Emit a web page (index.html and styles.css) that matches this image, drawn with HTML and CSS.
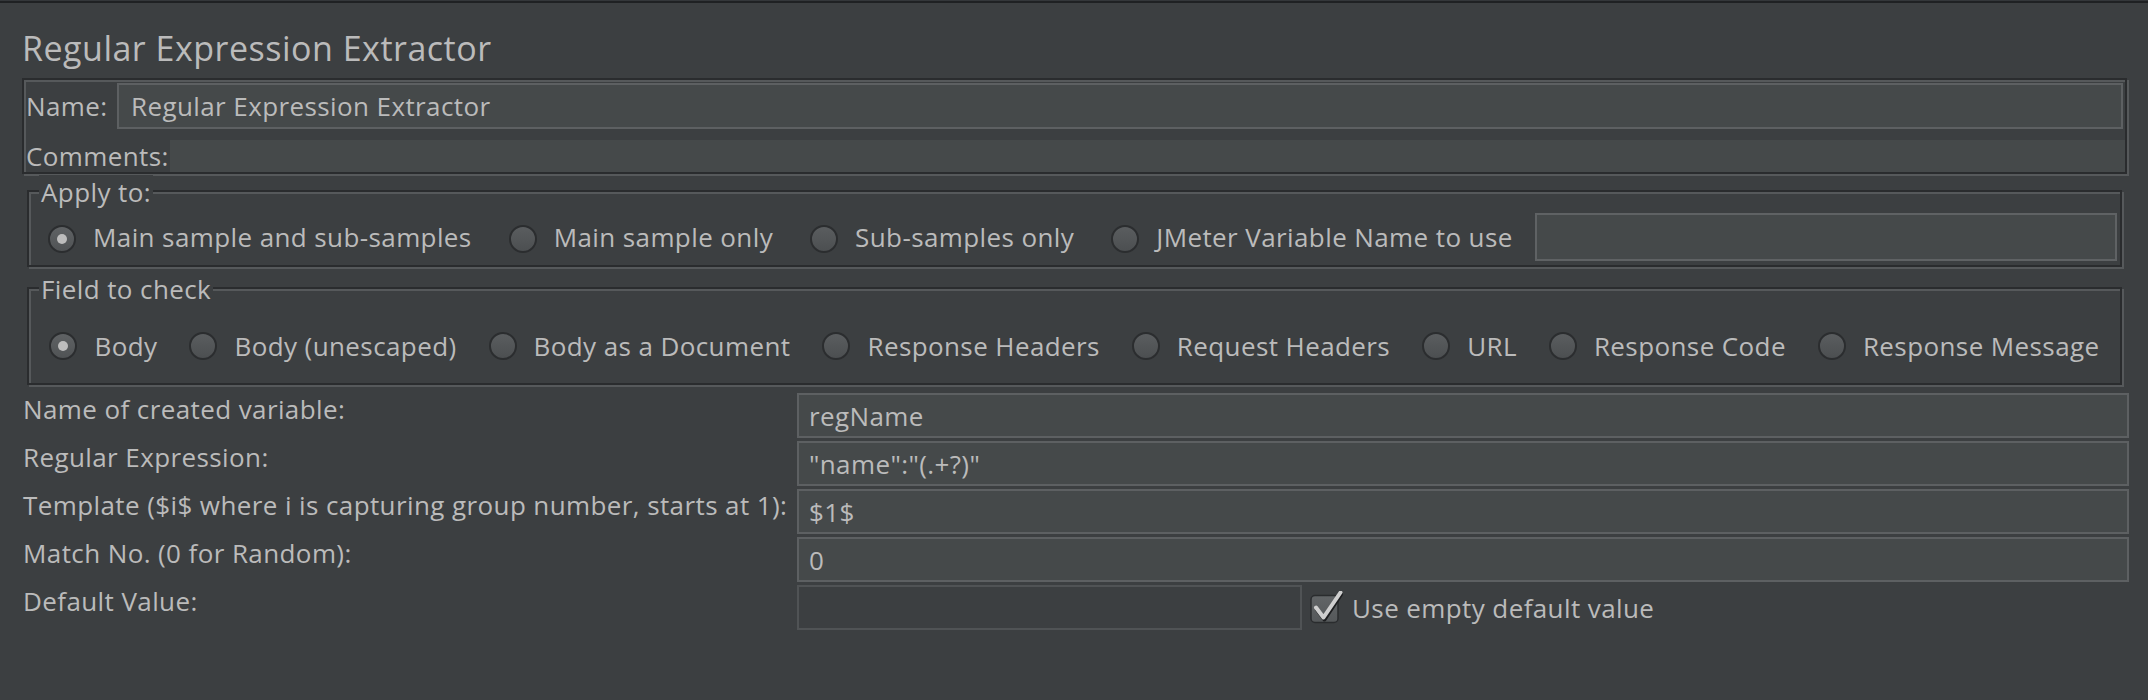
FILE: index.html
```html
<!DOCTYPE html>
<html>
<head>
<meta charset="utf-8">
<title>Regular Expression Extractor</title>
<link rel="stylesheet" href="styles.css">
</head>
<body>
<div class="topline"></div>
<div class="title">Regular Expression Extractor</div>

<div class="etched namepanel">
  <div class="name-row">
    <div class="name-label">Name:</div>
    <div class="field name-field">Regular Expression Extractor</div>
  </div>
  <div class="comments-row">
    <div class="comments-label">Comments:</div>
    <div class="comments-fill"></div>
  </div>
</div>

<div class="etched group apply">
  <span class="legend">Apply to:</span>
  <div class="opt"><span class="radio on"><span class="dot"></span></span><span>Main sample and sub-samples</span></div>
  <div class="opt"><span class="radio"></span><span>Main sample only</span></div>
  <div class="opt"><span class="radio"></span><span>Sub-samples only</span></div>
  <div class="opt last"><span class="radio"></span><span>JMeter Variable Name to use</span></div>
  <div class="field var-field"></div>
</div>

<div class="etched group check">
  <span class="legend">Field to check</span>
  <div class="opt"><span class="radio on"><span class="dot"></span></span><span>Body</span></div>
  <div class="opt"><span class="radio"></span><span>Body (unescaped)</span></div>
  <div class="opt"><span class="radio"></span><span>Body as a Document</span></div>
  <div class="opt"><span class="radio"></span><span>Response Headers</span></div>
  <div class="opt"><span class="radio"></span><span>Request Headers</span></div>
  <div class="opt"><span class="radio"></span><span>URL</span></div>
  <div class="opt"><span class="radio"></span><span>Response Code</span></div>
  <div class="opt"><span class="radio"></span><span>Response Message</span></div>
</div>

<div class="form">
  <div class="flabel">Name of created variable:</div>
  <div class="field">regName</div>
  <div class="flabel">Regular Expression:</div>
  <div class="field">"name":"(.+?)"</div>
  <div class="flabel">Template ($i$ where i is capturing group number, starts at 1):</div>
  <div class="field">$1$</div>
  <div class="flabel">Match No. (0 for Random):</div>
  <div class="field">0</div>
  <div class="flabel">Default Value:</div>
  <div class="default-row">
    <div class="field disabled"></div>
    <svg class="checkbox" width="36" height="34" viewBox="0 0 36 34">
      <defs>
        <linearGradient id="cbg" x1="0" y1="0" x2="0" y2="1">
          <stop offset="0" stop-color="#626567"/>
          <stop offset="1" stop-color="#55585a"/>
        </linearGradient>
      </defs>
      <rect x="3" y="4.5" width="27" height="27" rx="4" ry="4" fill="url(#cbg)" stroke="#2a2c2e" stroke-width="1.5"/>
      <path d="M9 18.5 L16.5 28.5 L33 3.5" fill="none" stroke="#1d1e20" stroke-width="4" stroke-linecap="round" stroke-linejoin="round"/>
      <path d="M8 16.5 L15.5 26.5 L32.5 1.5" fill="none" stroke="#cfcfcf" stroke-width="4" stroke-linecap="round" stroke-linejoin="round"/>
    </svg>
    <span class="cb-label">Use empty default value</span>
  </div>
</div>
</body>
</html>
```

FILE: styles.css
```css
* {
  box-sizing: border-box;
}

html,
body {
  margin: 0;
  padding: 0;
  background: #3c3f41;
}

body {
  width: 2148px;
  height: 700px;
  overflow: hidden;
  font-family: "Open Sans", "Liberation Sans", sans-serif;
  font-size: 26px;
  letter-spacing: 0.4px;
  color: #bbbbbb;
}

.topline {
  height: 3px;
  background: #1f2123;
  border-top: 1px solid #34373a;
}

.title {
  margin: 22px 0 0 22px;
  height: 46px;
  font-size: 34px;
  line-height: 46px;
  letter-spacing: 0.5px;
}

/* etched border, Swing style: dark rect + light rect offset */
.etched {
  border: 2px solid #2a2c2e;
  box-shadow: inset 2px 2px 0 #56595b, 2px 2px 0 #56595b;
}

.namepanel {
  margin: 7px 0 0 22px;
  width: 2105px;
  height: 96px;
  padding: 3px 0 0 2px;
}

.name-row {
  display: flex;
  height: 46px;
  line-height: 46px;
}

.name-label {
  width: 91px;
  flex: none;
}

.field {
  display: flex;
  align-items: center;
  height: 45px;
  padding-left: 10px;
  background: #45494a;
  border: 2px solid #5d6062;
  white-space: nowrap;
}

.name-field {
  flex: 1;
  height: 46px;
  margin-right: 2px;
  padding-left: 12px;
}

.comments-row {
  display: flex;
  height: 32px;
  margin-top: 11px;
  line-height: 32px;
}

.comments-label {
  width: 144px;
  flex: none;
}

.comments-fill {
  flex: 1;
  background: #45494a;
}

.group {
  position: relative;
  margin-left: 27px;
  width: 2095px;
  display: flex;
  align-items: center;
}

.legend {
  position: absolute;
  top: -17px;
  left: 10px;
  padding: 0 2px;
  line-height: 35px;
  background: #3c3f41;
  white-space: nowrap;
}

.apply {
  margin-top: 16px;
  height: 77px;
  padding: 21px 3px 4px 19px;
}

.check {
  margin-top: 20px;
  height: 98px;
  padding: 39px 0 19px;
  justify-content: center;
  gap: 32px;
}

.opt {
  display: flex;
  align-items: center;
  gap: 17px;
  white-space: nowrap;
  line-height: 36px;
}

.apply .opt {
  margin-right: 37px;
}

.apply .opt.last {
  margin-right: 22px;
}

.apply .radio {
  margin-top: 4px;
}

.radio {
  flex: none;
  width: 28px;
  height: 28px;
  border-radius: 50%;
  border: 2px solid #2b2d2f;
  background: linear-gradient(180deg, #5a5d5f 0%, #4c4f51 100%);
  display: flex;
  align-items: center;
  justify-content: center;
}

.radio.on {
  background: linear-gradient(180deg, #5f6264 0%, #505355 100%);
}

.dot {
  width: 10px;
  height: 10px;
  border-radius: 50%;
  background: #bdbdbd;
}

.var-field {
  flex: 1;
  height: 48px;
  border-color: #5f6264;
}

.form {
  margin: 8px 0 0 23px;
  width: 2106px;
  display: grid;
  grid-template-columns: 774px 1fr;
  grid-auto-rows: 45px;
  row-gap: 3px;
}

.flabel {
  line-height: 32px;
  white-space: nowrap;
}

.default-row {
  display: flex;
  align-items: center;
}

.field.disabled {
  width: 505px;
  flex: none;
  background: #3c3f41;
  border-color: #505355;
}

.checkbox {
  flex: none;
  margin-left: 6px;
}

.cb-label {
  margin-left: 8px;
  white-space: nowrap;
}
```
